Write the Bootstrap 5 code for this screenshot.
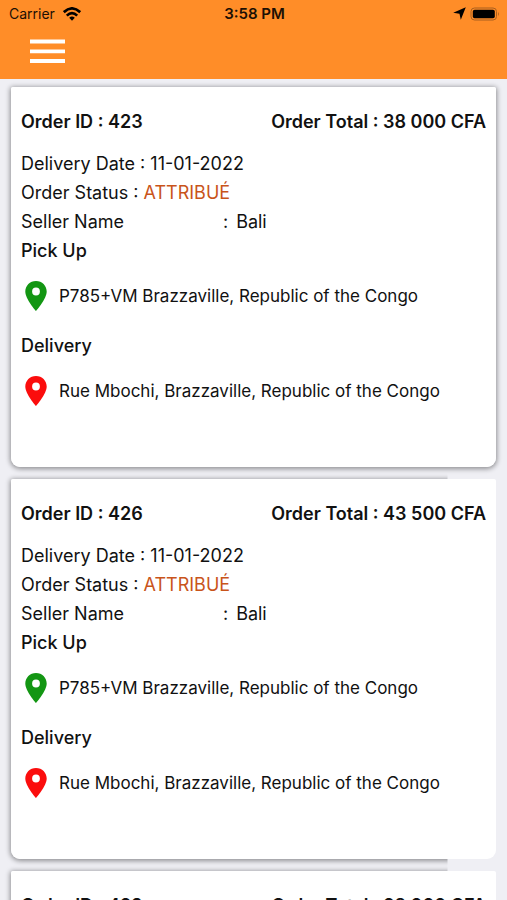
<!DOCTYPE html>
<html lang="en">
<head>
<meta charset="utf-8">
<meta name="viewport" content="width=device-width, initial-scale=1">
<title>Orders</title>
<link href="https://cdn.jsdelivr.net/npm/bootstrap@5.3.0/dist/css/bootstrap.min.css" rel="stylesheet">
<style>
body { background: #efeff4; color: #111; font-family: Inter, "Liberation Sans", sans-serif; font-size: 18px; line-height: 29px; }
.app-header { background: #ff8d28; height: 79px; }
.status-bar { height: 27px; padding: 0 7px 0 9px; font-size: 14px; line-height: 27px; color: #1c1004; }
.clock { font-size: 15px; font-weight: 600; }
.menu-btn { margin-left: 30px; line-height: 0; }
.orders { padding: 8px 11px 12px; gap: 12px; scrollbar-width: none; }
.order { isolation: isolate; border-radius: 2px 2px 9px 9px; padding: 21px 10px 41px; }
.order::before { content: ""; position: absolute; inset: 0; z-index: -2; border-radius: inherit; box-shadow: 0 1px 5px 1px rgba(0,0,0,.4); }
.order::after { content: ""; position: absolute; inset: 0; z-index: -1; border-radius: inherit; background: #fff; }
.order + .order::before { clip-path: inset(-10px 10% -10px -10px); }
.order h2 { font-size: 18px; line-height: 28px; font-weight: 600; margin: 0; }
.order-top { margin-bottom: 13px; }
.order h3 { font-size: 18px; line-height: 29px; font-weight: 500; margin: 0; }
.state { color: #c9541a; }
.seller-label { width: 43%; margin-right: 2px; }
.place { height: 34px; margin: 14px 0 18px; padding-left: 4px; gap: 12px; font-size: 17px; }
.pin-green { color: #139613; }
.pin-red { color: #fb0d0d; }
</style>
<script src="https://cdn.jsdelivr.net/npm/bootstrap@5.3.0/dist/js/bootstrap.bundle.min.js" defer></script>
</head>
<body class="vh-100 d-flex flex-column overflow-hidden">
<svg class="d-none"><symbol id="pin" viewBox="0 0 22 30"><path fill="currentColor" fill-rule="evenodd" d="M11 0C4.900 0 0.300 4.700 0.300 10.500C0.300 18 11 30 11 30S21.700 18 21.700 10.500C21.700 4.700 17.100 0 11 0ZM11 6.600a3.900 3.900 0 1 1 0 7.800a3.900 3.900 0 1 1 0-7.800Z"/></symbol></svg>
<header class="app-header flex-shrink-0">
  <div class="status-bar row g-0 align-items-center">
    <div class="col d-flex align-items-center gap-2"><span>Carrier</span>
      <svg width="18" height="14" viewBox="0 0 18 14" fill="none" stroke="#000" stroke-width="2.700" aria-hidden="true"><path d="M.8 5.200Q9-2.400 17.200 5.200M3.800 8.600Q9 3.600 14.200 8.600"/><path d="M6.200 10.800Q9 8.300 11.800 10.800L9 13.800Z" fill="#000" stroke="none"/></svg>
    </div>
    <div class="col-auto clock">3:58 PM</div>
    <div class="col d-flex align-items-center justify-content-end gap-1">
      <svg width="13" height="13" viewBox="0 0 12 12" aria-hidden="true"><path d="M11.800.2L7.200 11.800L6 6.200L.2 5.200Z"/></svg>
      <svg width="30" height="14" viewBox="0 0 30 14" aria-hidden="true"><rect x="1" y="1" width="25.500" height="12" rx="3.500" fill="none" stroke="#a85f1e"/><rect x="2.800" y="2.800" width="22" height="8.400" rx="1.800"/><path d="M28 4.800q1.800 2.200 0 4.400z" fill="#a85f1e"/></svg>
    </div>
  </div>
  <button type="button" class="btn p-0 border-0 rounded-0 menu-btn" aria-label="Menu">
    <svg width="35" height="48" viewBox="0 0 35 48"><path d="M0 14.500h35M0 24.300h35M0 34h35" stroke="#fff" stroke-width="3.800"/></svg>
  </button>
</header>
<main class="orders flex-grow-1 overflow-auto d-flex flex-column">
  <article class="order position-relative flex-shrink-0">
    <div class="order-top d-flex justify-content-between"><h2>Order ID : 423</h2><h2>Order Total : 38 000 CFA</h2></div>
    <div>Delivery Date : 11-01-2022</div>
    <div>Order Status : <span class="state">ATTRIBUÉ</span></div>
    <div class="d-flex"><span class="seller-label">Seller Name</span><span class="me-2">:</span><span>Bali</span></div>
    <h3>Pick Up</h3>
    <div class="place d-flex align-items-center"><svg class="pin-green" width="22" height="30" aria-hidden="true"><use href="#pin"/></svg><span>P785+VM Brazzaville, Republic of the Congo</span></div>
    <h3>Delivery</h3>
    <div class="place d-flex align-items-center"><svg class="pin-red" width="22" height="30" aria-hidden="true"><use href="#pin"/></svg><span>Rue Mbochi, Brazzaville, Republic of the Congo</span></div>
  </article>
  <article class="order position-relative flex-shrink-0">
    <div class="order-top d-flex justify-content-between"><h2>Order ID : 426</h2><h2>Order Total : 43 500 CFA</h2></div>
    <div>Delivery Date : 11-01-2022</div>
    <div>Order Status : <span class="state">ATTRIBUÉ</span></div>
    <div class="d-flex"><span class="seller-label">Seller Name</span><span class="me-2">:</span><span>Bali</span></div>
    <h3>Pick Up</h3>
    <div class="place d-flex align-items-center"><svg class="pin-green" width="22" height="30" aria-hidden="true"><use href="#pin"/></svg><span>P785+VM Brazzaville, Republic of the Congo</span></div>
    <h3>Delivery</h3>
    <div class="place d-flex align-items-center"><svg class="pin-red" width="22" height="30" aria-hidden="true"><use href="#pin"/></svg><span>Rue Mbochi, Brazzaville, Republic of the Congo</span></div>
  </article>
  <article class="order position-relative flex-shrink-0">
    <div class="order-top d-flex justify-content-between"><h2>Order ID : 429</h2><h2>Order Total : 28 000 CFA</h2></div>
  </article>
</main>
</body>
</html>
